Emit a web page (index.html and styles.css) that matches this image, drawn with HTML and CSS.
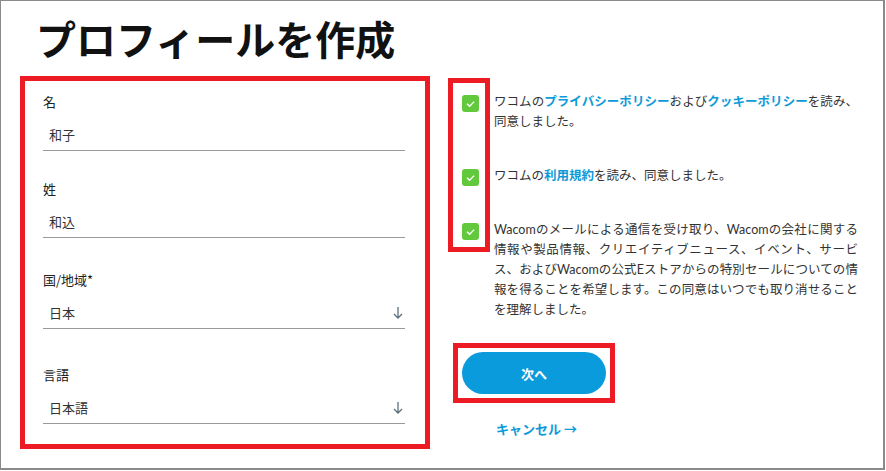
FILE: index.html
```html
<!DOCTYPE html>
<html lang="ja">
<head>
    <meta charset="UTF-8">
    <meta name="viewport" content="width=device-width, initial-scale=1.0">
    <title>プロフィールを作成</title>
    <link rel="stylesheet" href="styles.css">
</head>
<body>
    <div class="page">
        <h1 class="page-title">プロフィールを作成</h1>

        <div class="content">
            <!-- Profile form -->
            <div class="form-box">
                <div class="field">
                    <div class="field-label">名</div>
                    <div class="field-value">和子</div>
                </div>
                <div class="field">
                    <div class="field-label">姓</div>
                    <div class="field-value">和込</div>
                </div>
                <div class="field field-wide">
                    <div class="field-label">国/地域*</div>
                    <div class="field-value select">
                        <span>日本</span>
                        <svg class="arrow" width="10" height="14" viewBox="0 0 10 14"><path d="M5 1v11M1 8l4 4 4-4" fill="none" stroke="#5d717d" stroke-width="1.3"/></svg>
                    </div>
                </div>
                <div class="field field-wider">
                    <div class="field-label">言語</div>
                    <div class="field-value select">
                        <span>日本語</span>
                        <svg class="arrow" width="10" height="14" viewBox="0 0 10 14"><path d="M5 1v11M1 8l4 4 4-4" fill="none" stroke="#5d717d" stroke-width="1.3"/></svg>
                    </div>
                </div>
            </div>

            <!-- Consents & actions -->
            <div class="side">
                <div class="consents">
                    <div class="highlight"></div>
                    <div class="consent">
                        <span class="check"><svg width="17" height="17" viewBox="0 0 17 17"><path d="M5 8.8l2.6 2.5L12.2 6.6" fill="none" stroke="#fff" stroke-width="1.3"/></svg></span>
                        <p>ワコムの<a href="#">プライバシーポリシー</a>および<a href="#">クッキーポリシー</a>を読み、同意しました。</p>
                    </div>
                    <div class="consent">
                        <span class="check"><svg width="17" height="17" viewBox="0 0 17 17"><path d="M5 8.8l2.6 2.5L12.2 6.6" fill="none" stroke="#fff" stroke-width="1.3"/></svg></span>
                        <p>ワコムの<a href="#">利用規約</a>を読み、同意しました。</p>
                    </div>
                    <div class="consent">
                        <span class="check"><svg width="17" height="17" viewBox="0 0 17 17"><path d="M5 8.8l2.6 2.5L12.2 6.6" fill="none" stroke="#fff" stroke-width="1.3"/></svg></span>
                        <p>Wacomのメールによる通信を受け取り、Wacomの会社に関する情報や製品情報、クリエイティブニュース、イベント、サービス、およびWacomの公式Eストアからの特別セールについての情報を得ることを希望します。この同意はいつでも取り消せることを理解しました。</p>
                    </div>
                </div>

                <div class="btn-frame">
                    <button class="next-btn">次へ</button>
                </div>
                <a href="#" class="cancel-link">キャンセル →</a>
            </div>
        </div>
    </div>
</body>
</html>
```

FILE: styles.css
```css
:root {
    --frame-red: #ed1c24;
    --border-gray: #8a8a8a;
    --line-gray: #9a9a9a;
    --text-dark: #222222;
    --text-body: #333333;
    --link-blue: #0e9ad8;
    --btn-blue: #0a9bdc;
    --check-green: #62c93c;
}

body {
    margin: 0;
    font-family: Lato, "Noto Sans CJK JP", sans-serif;
    color: var(--text-dark);
    background: #ffffff;
}

.page {
    width: 885px;
    height: 470px;
    box-sizing: border-box;
    border: 1px solid var(--border-gray);
    border-right-width: 2px;
    border-bottom-width: 2px;
    padding: 13px 0 0 19px;
}

.page-title {
    margin: 0 0 0 16px;
    font-family: "Noto Sans CJK JP", sans-serif;
    font-size: 40px;
    line-height: 48px;
    font-weight: 700;
    color: #111111;
}

.content {
    display: flex;
    align-items: flex-start;
    margin-top: 14px;
}

/* Form */
.form-box {
    width: 410px;
    height: 373px;
    box-sizing: border-box;
    border: 5px solid var(--frame-red);
    padding: 12px 20px 0 18px;
}

.field + .field {
    margin-top: 29px;
}

.field + .field-wide {
    margin-top: 33px;
}

.field + .field-wider {
    margin-top: 37px;
}

.field-label {
    font-family: "Noto Sans CJK JP", sans-serif;
    font-size: 13px;
    line-height: 18px;
    color: var(--text-dark);
    margin-bottom: 9px;
}

.field-value {
    height: 30px;
    line-height: 30px;
    padding-left: 6px;
    font-family: "Noto Sans CJK JP", sans-serif;
    font-size: 13px;
    color: var(--text-body);
    border-bottom: 1px solid var(--line-gray);
}

.select {
    display: flex;
    justify-content: space-between;
    align-items: center;
    padding-right: 2px;
}

/* Right side */
.side {
    margin-left: 23px;
    padding-top: 16px;
    display: flex;
    flex-direction: column;
    align-items: flex-start;
}

.consents {
    position: relative;
    padding-left: 9px;
    display: flex;
    flex-direction: column;
    gap: 34px;
}

.highlight {
    position: absolute;
    left: -5px;
    top: -14px;
    width: 42px;
    height: 174px;
    box-sizing: border-box;
    border: 5px solid var(--frame-red);
}

.consent {
    display: flex;
    align-items: flex-start;
    gap: 15px;
}

.check {
    flex: none;
    width: 17px;
    height: 17px;
    margin-top: 3px;
    border-radius: 3px;
    background-color: var(--check-green);
    display: flex;
}

.consent p {
    margin: 0;
    width: 364px;
    font-size: 12.5px;
    line-height: 20px;
    color: var(--text-body);
    text-align: justify;
}

.consent a {
    color: var(--link-blue);
    font-weight: 700;
    text-decoration: none;
}

.btn-frame {
    margin-top: 23px;
    border: 5px solid var(--frame-red);
    padding: 4px;
}

.next-btn {
    display: block;
    width: 144px;
    height: 42px;
    border: none;
    border-radius: 21px;
    background-color: var(--btn-blue);
    color: #ffffff;
    font-family: "Noto Sans CJK JP", sans-serif;
    font-size: 13px;
    font-weight: 700;
    cursor: pointer;
}

.cancel-link {
    margin: 16px 0 0 43px;
    font-family: "Noto Sans CJK JP", sans-serif;
    font-size: 13px;
    line-height: 20px;
    font-weight: 700;
    color: var(--link-blue);
    text-decoration: none;
}
```
